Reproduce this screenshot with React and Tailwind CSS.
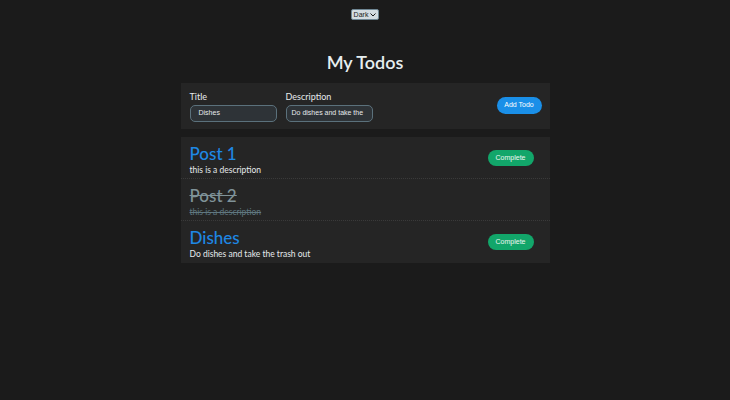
import React from "react";

const rows = [
  { title: "Post 1", desc: "this is a description", done: false },
  { title: "Post 2", desc: "this is a description", done: true },
  { title: "Dishes", desc: "Do dishes and take the trash out", done: false },
];

export default function App() {
  return (
    <div className="min-h-[400px] w-full bg-[#1b1b1b] text-[#e6eaec]" style={{ fontFamily: "Lato, 'Noto Sans', sans-serif" }}>
      <div className="flex justify-center pt-[9px]">
        <div className="flex h-[11px] items-center gap-[2px] rounded-[2px] border border-[#6f8794] bg-[#d3dce1] px-[2px] text-[7px] leading-none text-[#1b1b1b]" style={{ fontFamily: "'Liberation Sans', sans-serif" }}>
          <span>Dark</span>
          <svg width="6" height="4" viewBox="0 0 6 4"><path d="M0.5 0.5 L3 3 L5.5 0.5" fill="none" stroke="#1b1b1b" strokeWidth="1" /></svg>
        </div>
      </div>
      <h1 className="mt-[30px] text-center text-[18px] font-semibold leading-[24px] text-[#e6eef0]">My Todos</h1>
      <div className="mx-auto mt-[9px] w-[369px]">
        <div className="flex h-[46px] items-center bg-[#252525] pl-[9px] pr-[8px]">
          <div className="flex gap-[9px]">
            <div className="flex flex-col">
              <label className="text-[9px] leading-[11px] text-[#e6eaec]">Title</label>
              <div className="mt-[3px] flex h-[17px] w-[87px] items-center rounded-[5px] border border-[#5b717c] bg-[#2e3337] px-[8px] text-[7px] text-[#e6eaec]" style={{ fontFamily: "'Liberation Sans', sans-serif" }}>Dishes</div>
            </div>
            <div className="flex flex-col">
              <label className="text-[9px] leading-[11px] text-[#e6eaec]">Description</label>
              <div className="mt-[3px] flex h-[17px] w-[87px] items-center overflow-hidden whitespace-nowrap rounded-[5px] border border-[#5b717c] bg-[#2e3337] px-[5px] text-[7px] text-[#e6eaec]" style={{ fontFamily: "'Liberation Sans', sans-serif" }}>Do dishes and take the</div>
            </div>
          </div>
          <button className="ml-auto mt-[-2px] flex h-[17px] w-[45px] items-center justify-center rounded-full bg-[#1a8fe8] text-[7px] text-white" style={{ fontFamily: "'Liberation Sans', sans-serif" }}>Add Todo</button>
        </div>
        <div className="mt-[8px] bg-[#252525]">
          {rows.map((r, i) => (
            <div key={i} className={"flex h-[42px] items-start pl-[9px] pr-[16px] " + (i < rows.length - 1 ? "border-b border-dotted border-[#3a3a3a]" : "")}>
              <div className="flex flex-col pt-[7px]">
                <div className={"text-[17px] font-medium leading-[20px] " + (r.done ? "text-[#7f9298] line-through" : "text-[#1e88e5]")}>{r.title}</div>
                <div className={"mt-[1px] text-[8.5px] leading-[11px] " + (r.done ? "text-[#5f7780] line-through" : "text-[#e6eaec]")}>{r.desc}</div>
              </div>
              {!r.done && (
                <button className="ml-auto mt-[13px] flex h-[16px] w-[46px] items-center justify-center rounded-full bg-[#12a66a] text-[7px] text-[#eef6f2]" style={{ fontFamily: "'Liberation Sans', sans-serif" }}>Complete</button>
              )}
            </div>
          ))}
        </div>
      </div>
    </div>
  );
}
